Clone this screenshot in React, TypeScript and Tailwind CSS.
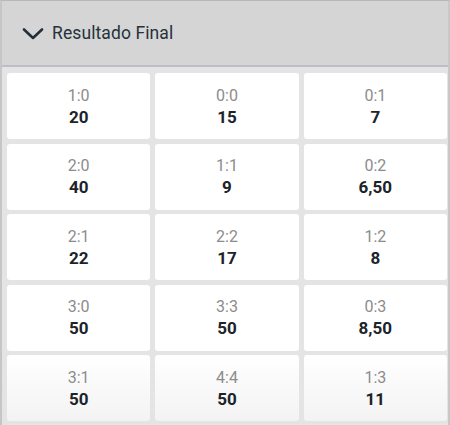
import React from "react";

const odds: { score: string; price: string }[] = [
  { score: "1:0", price: "20" },
  { score: "0:0", price: "15" },
  { score: "0:1", price: "7" },
  { score: "2:0", price: "40" },
  { score: "1:1", price: "9" },
  { score: "0:2", price: "6,50" },
  { score: "2:1", price: "22" },
  { score: "2:2", price: "17" },
  { score: "1:2", price: "8" },
  { score: "3:0", price: "50" },
  { score: "3:3", price: "50" },
  { score: "0:3", price: "8,50" },
  { score: "3:1", price: "50" },
  { score: "4:4", price: "50" },
  { score: "1:3", price: "11" },
];

export default function App() {
  return (
    <div
      className="w-[450px] h-[425px] overflow-hidden bg-[#e4e4e4] border-t border-t-[#b4b8bc] border-l-2 border-l-[#c4c6c8] border-r-2 border-r-[#c8c8c8]"
      style={{ fontFamily: "Roboto, 'Noto Sans', sans-serif" }}
    >
      <div className="h-[66px] bg-[#d5d5d5] border-b-2 border-b-[#bcc0c4] flex items-center pl-[20px] gap-[8px] pt-[1px]">
        <svg width="22" height="14" viewBox="0 0 22 14" fill="none">
          <path d="M2 2.5 L11 11 L20 2.5" stroke="#23303b" strokeWidth="2.6" strokeLinecap="round" strokeLinejoin="round" />
        </svg>
        <span className="text-[17.5px] text-[#26313b] tracking-[0.1px]">Resultado Final</span>
      </div>
      <div className="grid grid-cols-3 gap-x-[5px] gap-y-[4.5px] pl-[5px] pr-[1px] pt-[6px]">
        {odds.map((o, i) => (
          <div
            key={o.score + i}
            className={
              "h-[66px] rounded-[3px] flex flex-col items-center justify-center " +
              (i >= 12 ? "bg-gradient-to-b from-white to-[#f3f3f3]" : "bg-white")
            }
          >
            <span className="text-[16px] leading-[21px] text-[#8c8c8c]">{o.score}</span>
            <span className="text-[17px] leading-[22px] font-bold text-[#1c232a]">{o.price}</span>
          </div>
        ))}
      </div>
    </div>
  );
}
